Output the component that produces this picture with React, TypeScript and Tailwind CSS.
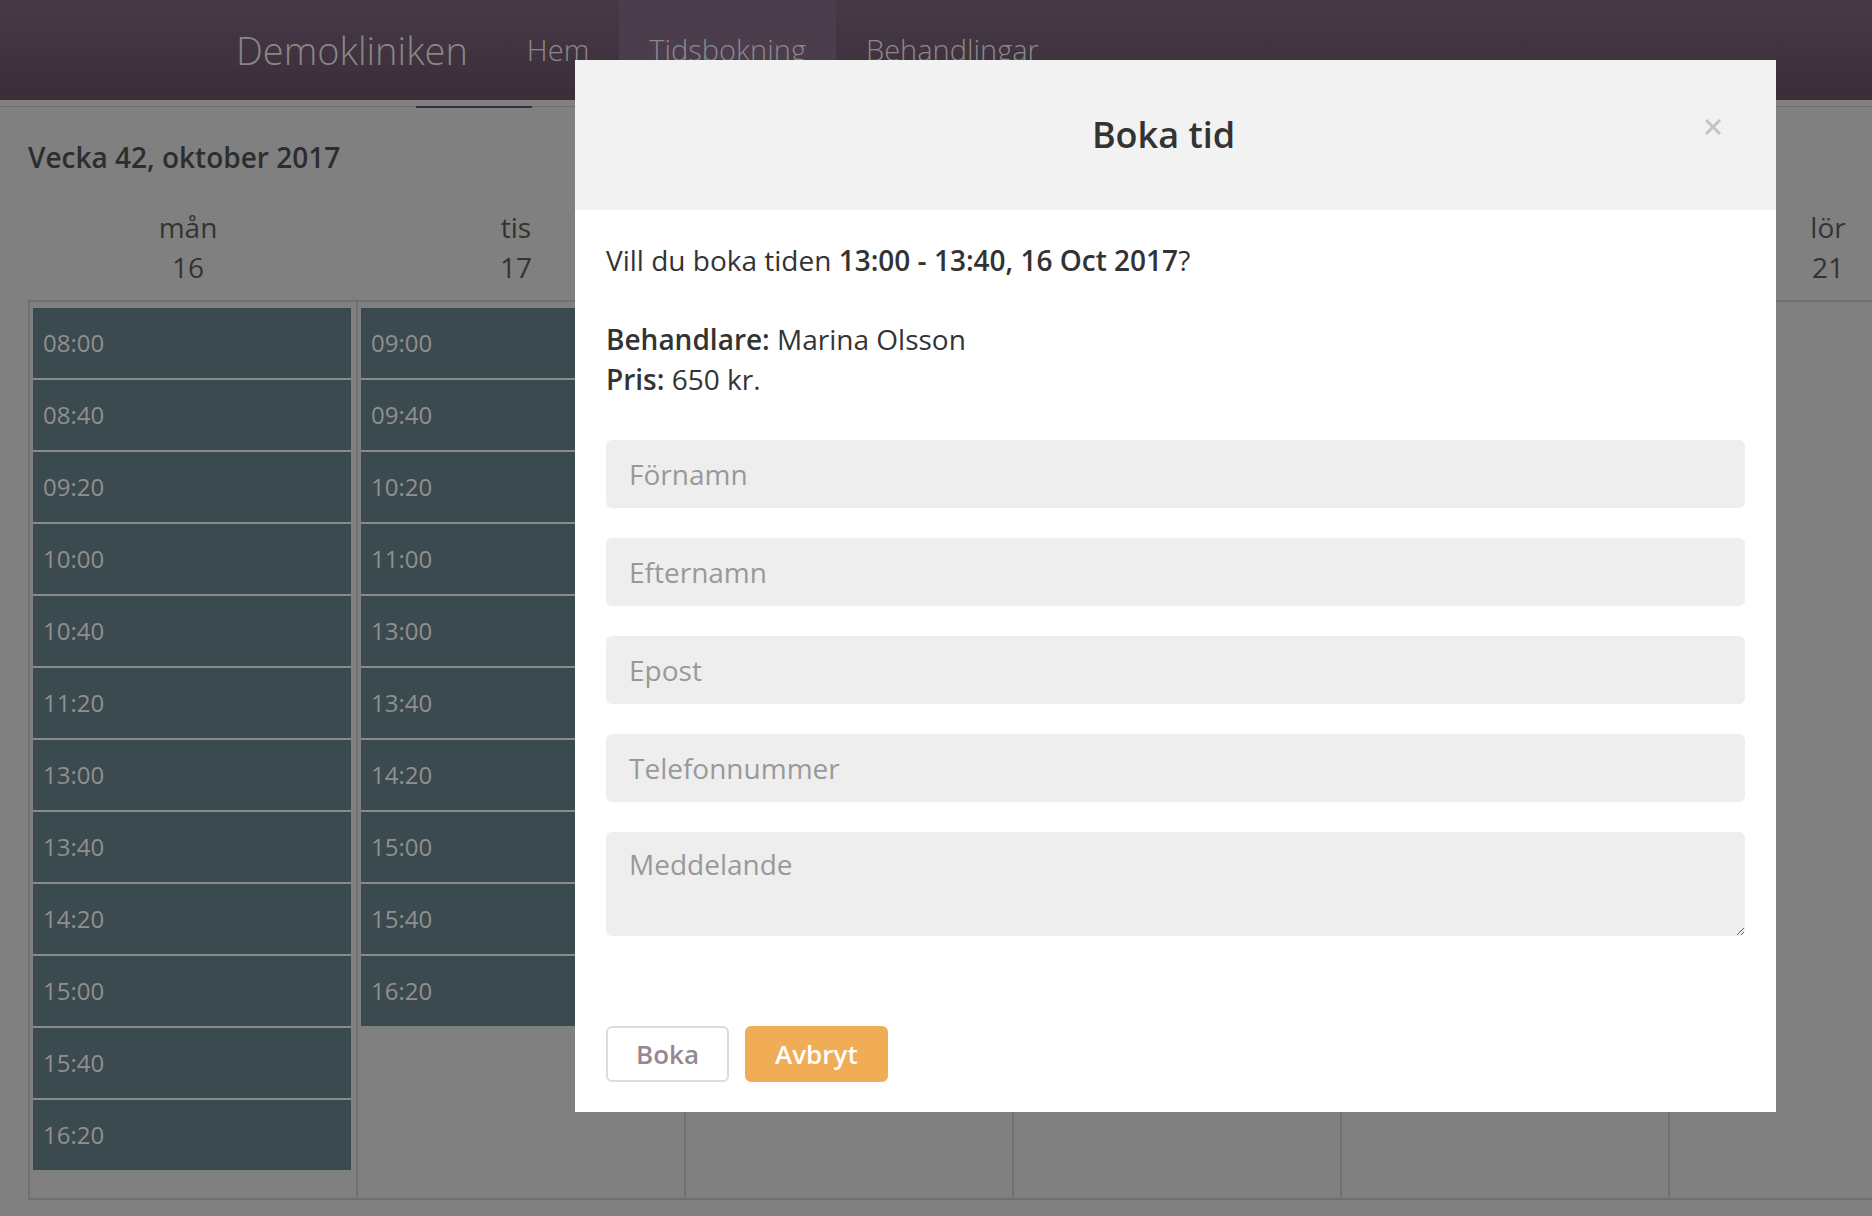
import { useState } from "react";

const days = [
  { name: "mån", date: "16", slots: ["08:00", "08:40", "09:20", "10:00", "10:40", "11:20", "13:00", "13:40", "14:20", "15:00", "15:40", "16:20"] },
  { name: "tis", date: "17", slots: ["09:00", "09:40", "10:20", "11:00", "13:00", "13:40", "14:20", "15:00", "15:40", "16:20"] },
  { name: "ons", date: "18", slots: [] as string[] },
  { name: "tor", date: "19", slots: [] as string[] },
  { name: "fre", date: "20", slots: [] as string[] },
  { name: "lör", date: "21", slots: [] as string[] },
  { name: "sön", date: "22", slots: [] as string[] },
];

const fields = ["Förnamn", "Efternamn", "Epost", "Telefonnummer"];

const Header = () => {
  return (
    <div className="h-[100px] flex items-stretch pl-[236px] bg-linear-to-b from-[#473a47] to-[#3b2e39]">
      <div className="self-center text-[38px] font-light text-[#878787] leading-normal">
        Demokliniken
      </div>
      <nav className="ml-[29px] flex">
        <a className="px-[30px] flex items-center text-[29px] font-light text-[#8a8a8a]">Hem</a>
        <a className="px-[30px] flex items-center text-[29px] font-light text-[#8a8a8a] bg-[#4b3d4c]">
          Tidsbokning
        </a>
        <a className="px-[30px] flex items-center text-[29px] font-light text-[#8a8a8a]">Behandlingar</a>
      </nav>
    </div>
  );
};

const Week = () => {
  return (
    <div className="pl-[28px]">
      <h2 className="mt-[29px] text-[28px] leading-[40px] font-semibold text-[#2d2d2d]">
        Vecka 42, oktober 2017
      </h2>
      <div className="flex mt-[30px] pb-[13px]">
        {days.map((d) => (
          <div key={d.name} className="w-[328px] shrink-0 pr-[8px] text-center text-[28px] leading-[40px] text-[#333]">
            <div>{d.name}</div>
            <div>{d.date}</div>
          </div>
        ))}
      </div>
      <div className="flex h-[900px] border-t-2 border-b-2 border-[#707070]">
        {days.map((d) => (
          <div key={d.name} className="w-[328px] shrink-0 border-l-2 border-[#707070] pl-[3px] pr-[5px] pt-[6px]">
            {d.slots.map((s) => (
              <div
                key={s}
                className="h-[72px] border-b-2 border-[#8a8a8a] last:border-b-0 last:h-[70px] bg-[#3b4a4f] flex items-center pl-[10px] text-[24px] text-[#8f8f8f]"
              >
                {s}
              </div>
            ))}
          </div>
        ))}
      </div>
    </div>
  );
};

const BookingModal = () => {
  const [msg, setMsg] = useState("");
  return (
    <div className="absolute left-[575px] top-[60px] w-[1201px] bg-white">
      <div className="relative h-[150px] bg-[#f2f2f2] flex items-center">
        <h3 className="flex-1 mr-[24px] text-center text-[36px] font-semibold text-[#333] leading-normal">
          Boka tid
        </h3>
        <button className="absolute right-[54px] top-[58px] w-[18px] h-[18px]">
          <svg width="18" height="18" viewBox="0 0 18 18">
            <path d="M2 2 L16 16 M16 2 L2 16" stroke="#c4c4c4" strokeWidth="3" />
          </svg>
        </button>
      </div>
      <div className="px-[31px] pt-[30px] pb-[30px] text-[28px] leading-[40px] text-[#333]">
        <p>
          Vill du boka tiden <span className="font-semibold">13:00 - 13:40, 16 Oct 2017</span>?
        </p>
        <p className="mt-[39px]">
          <span className="font-semibold">Behandlare:</span> Marina Olsson
        </p>
        <p>
          <span className="font-semibold">Pris:</span> 650 kr.
        </p>
        <div className="mt-[41px] flex flex-col gap-[30px]">
          {fields.map((f) => (
            <input
              key={f}
              placeholder={f}
              className="h-[68px] w-full rounded-[6px] bg-[#eeeeee] px-[23px] text-[28px] text-[#333] placeholder:text-[#999] outline-none"
            />
          ))}
          <textarea
            placeholder="Meddelande"
            value={msg}
            onChange={(e) => setMsg(e.target.value)}
            className="h-[104px] w-full rounded-[6px] bg-[#eeeeee] px-[23px] pt-[11px] pb-[8px] text-[28px] leading-[1.5] text-[#333] placeholder:text-[#999] outline-none"
          />
        </div>
        <div className="mt-[90px] flex gap-[16px]">
          <button className="h-[56px] px-[28px] rounded-[6px] border-2 border-[#dcdcdc] bg-white text-[26px] font-semibold text-[#958892]">
            Boka
          </button>
          <button className="h-[56px] px-[28px] rounded-[6px] border-2 border-[#f0ad55] bg-[#f0ad55] text-[26px] font-semibold text-white">
            Avbryt
          </button>
        </div>
      </div>
    </div>
  );
}

export default function App() {
  return (
    <div className="relative w-full h-screen overflow-hidden bg-[#808080] font-['Open_Sans',sans-serif]">
      <Header />
      <div className="mt-[6px] flex h-[2px]">
        <div className="w-[416px] border-t border-[#6e6e6e]" />
        <div className="w-[116px] bg-[#34303a]" />
        <div className="flex-1 border-t border-[#6e6e6e]" />
      </div>
      <Week />
      <BookingModal />
    </div>
  );
}
